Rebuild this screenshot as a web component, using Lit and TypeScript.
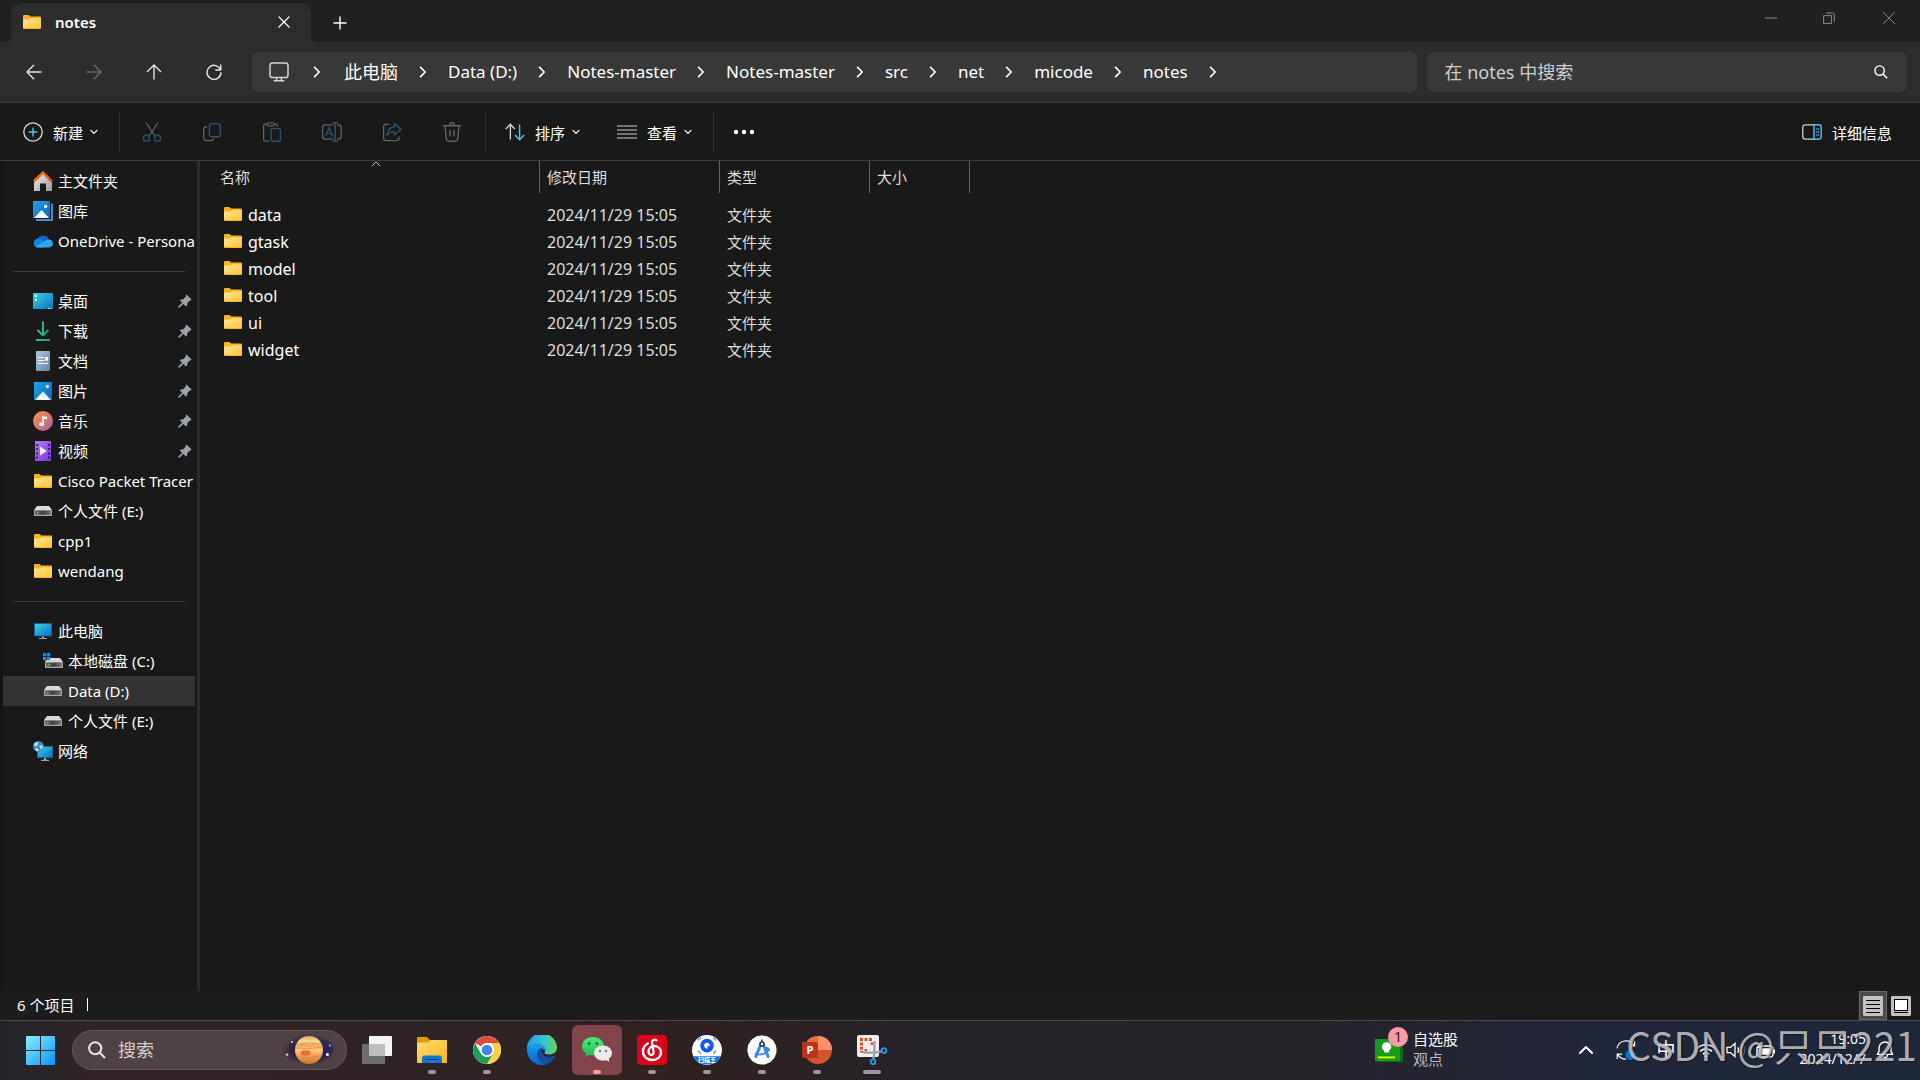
import { LitElement, html, css, svg, nothing, TemplateResult } from "lit";
import { customElement } from "lit/decorators.js";
import { classMap } from "lit/directives/class-map.js";

const icon = (w: number, h: number, body: unknown) =>
  html`<svg width=${w} height=${h} viewBox="0 0 ${w} ${h}" fill="none" aria-hidden="true">${body}</svg>`;

/* ---------- shared gradients ---------- */
const gradients = html`<svg class="defs" width="0" height="0" aria-hidden="true">
  <defs>
    <linearGradient id="gFolder" x1="0" y1="0" x2="1" y2="1"><stop offset="0" stop-color="#ffe8a0" /><stop offset="1" stop-color="#fdc42f" /></linearGradient>
    <linearGradient id="gScreen" x1="0" y1="0" x2="1" y2="1"><stop offset="0" stop-color="#34d6df" /><stop offset="1" stop-color="#0f6fc6" /></linearGradient>
    <linearGradient id="gPhoto" x1="0" y1="0" x2="1" y2="1"><stop offset="0" stop-color="#22a4ea" /><stop offset="1" stop-color="#0a63b8" /></linearGradient>
    <linearGradient id="gHouse" x1="0" y1="0" x2="1" y2="1"><stop offset="0" stop-color="#f2f2f2" /><stop offset="1" stop-color="#9a9a9a" /></linearGradient>
    <linearGradient id="gRoof" x1="0" y1="0" x2="1" y2="1"><stop offset="0" stop-color="#f7930f" /><stop offset="1" stop-color="#d2441a" /></linearGradient>
    <linearGradient id="gDown" x1="0" y1="0" x2="1" y2="0"><stop offset="0" stop-color="#2fc58a" /><stop offset="1" stop-color="#12a08b" /></linearGradient>
    <linearGradient id="gDoc" x1="0" y1="0" x2="1" y2="1"><stop offset="0" stop-color="#b4c6dc" /><stop offset="1" stop-color="#5f82a8" /></linearGradient>
    <linearGradient id="gMusic" x1="0" y1="0" x2="1" y2="1"><stop offset="0" stop-color="#f39a5c" /><stop offset=".55" stop-color="#d8706f" /><stop offset="1" stop-color="#9a5fbd" /></linearGradient>
    <linearGradient id="gVideo" x1="0" y1="0" x2="1" y2="1"><stop offset="0" stop-color="#b47af5" /><stop offset="1" stop-color="#7a35dd" /></linearGradient>
    <linearGradient id="gDrive" x1="0" y1="0" x2="1" y2="0"><stop offset="0" stop-color="#6a6a6a" /><stop offset=".5" stop-color="#3f3f3f" /><stop offset="1" stop-color="#757575" /></linearGradient>
    <linearGradient id="gLogo" gradientUnits="userSpaceOnUse" x1="0" y1="0" x2="29" y2="29"><stop offset="0" stop-color="#84f2ff" /><stop offset="1" stop-color="#0b93f8" /></linearGradient>
    <linearGradient id="gPlanet" x1="0" y1="0" x2="0" y2="1"><stop offset="0" stop-color="#e0a25c" /><stop offset=".18" stop-color="#fbd79a" /><stop offset=".34" stop-color="#f0a95a" /><stop offset=".5" stop-color="#fbc983" /><stop offset=".7" stop-color="#f3a14d" /><stop offset="1" stop-color="#c9703a" /></linearGradient>
    <radialGradient id="gSpace"><stop offset="0" stop-color="#1d1538" /><stop offset=".65" stop-color="#2a1d3c" stop-opacity=".8" /><stop offset="1" stop-color="#3a2a3c" stop-opacity="0" /></radialGradient>
    <linearGradient id="gEdgeA" x1="0" y1="0" x2="1" y2="0"><stop offset="0" stop-color="#1d9be6" /><stop offset=".55" stop-color="#35c3d8" /><stop offset="1" stop-color="#62d84e" /></linearGradient>
    <linearGradient id="gEdgeB" x1="0" y1="0" x2="0" y2="1"><stop offset="0" stop-color="#1aa0ea" /><stop offset="1" stop-color="#0a62c8" /></linearGradient>
    <linearGradient id="gTaskFolder" x1="0" y1="0" x2="1" y2="1"><stop offset="0" stop-color="#ffdc70" /><stop offset="1" stop-color="#f9b71c" /></linearGradient>
    <linearGradient id="gChat" x1="0" y1="0" x2="0" y2="1"><stop offset="0" stop-color="#4be87c" /><stop offset="1" stop-color="#1fbf57" /></linearGradient>
  </defs>
</svg>`;

/* ---------- small file icons ---------- */
const folder = () => icon(18, 14, svg`
  <path d="M0 1Q0 0 1 0H5.4L7.2 1.6H17Q18 1.6 18 2.6V13Q18 14 17 14H1Q0 14 0 13Z" fill="#f9b31b"/>
  <path d="M0 4.4H6.4L8 3.2H18V12.6Q18 13 17.4 13H.6Q0 13 0 12.6Z" fill="url(#gFolder)"/>`);
const home = () => icon(20, 20, svg`
  <path d="M1 9L10 1.5L19 9V20H13V12.5H7V20H1Z" fill="url(#gHouse)"/>
  <path d="M10 0L20 9.4L18.4 11.4L10 3.6L1.6 11.4L0 9.4Z" fill="url(#gRoof)"/>`);
const gallery = () => icon(20, 20, svg`
  <path d="M18 2.5H20V19Q20 20 19 20H3V18H18Z" fill="#3f8fd6"/>
  <rect width="17" height="17" rx="1" fill="url(#gPhoto)"/>
  <circle cx="12.6" cy="5.4" r="1.6" fill="#fff"/>
  <path d="M1 17L8.5 9L16 17Z" fill="#f3f8fd"/>`);
const cloud = () => icon(20, 14, svg`
  <path d="M3.5 7A6.6 6.6 0 0 1 15.6 4.6L18 9H3Z" fill="#0f64bf"/>
  <path d="M4.6 13.4A4.4 4.4 0 0 1 4.4 4.7Q7 4.2 9.6 6.2L16 10L10 13.4Z" fill="#1484de"/>
  <path d="M2.4 12.4L12.4 6.8A4 4 0 0 1 15.6 5.4A4 4 0 0 1 16 13.4H4.6Q3.2 13.4 2.4 12.4Z" fill="#2ba6f0"/>`);
const desktop = () => icon(20, 16, svg`
  <rect width="20" height="16" rx="1" fill="url(#gScreen)"/>
  <path d="M2 2H4V4H2ZM2 6H4V8H2Z" fill="#e8fbff"/><path d="M15 15H16.4V16H15ZM17.2 15H18.4V16H17.2Z" fill="#cfe6f7"/>`);
const download = () => icon(20, 20, svg`
  <path d="M10 .5V14M4.4 9L10 14.4L15.6 9" stroke="url(#gDown)" stroke-width="1.8"/>
  <path d="M10 .5V14" stroke="#26b98a" stroke-width="1.8"/><path d="M3 18H17V20H3Z" fill="url(#gDown)"/>`);
const documentIcon = () => icon(20, 20, svg`
  <rect x="3" width="14" height="20" rx="1" fill="url(#gDoc)"/>
  <path d="M5 6.5H11M5 9.5H11M5 12.5H15" stroke="#fff" stroke-width="1"/><rect x="12" y="6" width="3" height="3.6" fill="#fff"/>`);
const picture = () => icon(20, 18, svg`
  <rect x="1" width="18" height="18" rx="1" fill="url(#gPhoto)"/>
  <circle cx="14.4" cy="4.6" r="1.6" fill="#fff"/><path d="M2 18L10 9.4L18 18Z" fill="#f3f8fd"/>`);
const music = () => icon(20, 20, svg`
  <circle cx="10" cy="10" r="10" fill="url(#gMusic)"/>
  <ellipse cx="8.6" cy="13.2" rx="2.4" ry="2" fill="#fff"/><path d="M9.4 13V4.4Q11 6 14 5.6V8.2Q12 8.4 11 7.6V13Z" fill="#fff"/>`);
const video = () => icon(20, 20, svg`
  <rect x="2" width="16" height="20" rx="1" fill="url(#gVideo)"/>
  <path d="M3 3H5V5H3ZM3 7H5V9H3ZM3 11.4H5V13.4H3ZM3 15.6H5V17.6H3ZM15 3H17V5H15ZM15 7H17V9H15ZM15 11.4H17V13.4H15ZM15 15.6H17V17.6H15Z" fill="#3a1b78"/>
  <path d="M7 5.6L14 10L7 14.4Z" fill="#f4edff"/>`);
const driveBody = svg`<path d="M3 0H15L18 4H0Z" fill="#d9dadd"/><rect y="4" width="18" height="6" rx=".6" fill="#a9a9a9"/><rect x="1" y="4.6" width="16" height="4.2" fill="url(#gDrive)"/><rect x="3" y="6" width="1.6" height="1.6" fill="#35e04a"/>`;
const drive = () => icon(18, 10, driveBody);
const systemDrive = () => icon(20, 16, svg`
  <g transform="translate(2 5)">${driveBody}</g>
  <path d="M0 0H3.2V3.2H0ZM4 0H7.2V3.2H4ZM0 4H3.2V7.2H0ZM4 4H7.2V7.2H4Z" fill="#1493e8"/>`);
const pc = () => icon(18, 16, svg`
  <rect width="18" height="13.4" fill="#14649c"/><rect x="1" y="1" width="16" height="11.4" fill="url(#gScreen)"/>
  <path d="M8 13.4H10V15H13V16H5V15H8Z" fill="#9aa7b2"/>`);
const network = () => icon(20, 20, svg`
  <rect x="4" y="5" width="16" height="12" fill="#14649c"/><rect x="5" y="6" width="14" height="10" fill="url(#gScreen)"/>
  <path d="M11 17H13V18.8H16V20H8V18.8H11Z" fill="#9aa7b2"/>
  <circle cx="5.4" cy="5.4" r="5.4" fill="#3c8fc4"/><path d="M1 3Q3 .6 5 1.2L4.6 4.4L2 5.4ZM6.4 5L9.8 4Q10 7 8 8.6Z" fill="#c3e2f2"/><path d="M2.4 7L5 8L5.6 10H4Q2.6 9.4 2.4 7Z" fill="#e7f4fa"/>`);
const pin = () => icon(14, 14, svg`
  <path d="M8.4 .4L13.6 5.4L12.6 6.4L11.8 6.4L9.4 9L9.2 11.6L8 12.6L1.8 6.4L2.8 5.4L5.2 5.2L7.8 2.4L7.6 1.4Z" fill="#99a3ab"/>
  <path d="M5 9L.6 13.4" stroke="#99a3ab" stroke-width="1.6"/>`);

/* ---------- chrome icons ---------- */
const line = (w: number, h: number, d: string, sw = 1.4) =>
  icon(w, h, svg`<path d=${d} stroke="currentColor" stroke-width=${sw} stroke-linecap="round" stroke-linejoin="round"/>`);
const back = () => line(16, 16, "M1 8H15M7.6 1.2L1 8L7.6 14.8");
const forward = () => line(16, 16, "M15 8H1M8.4 1.2L15 8L8.4 14.8");
const up = () => line(16, 16, "M8 15V1M1.4 7.6L8 1L14.6 7.6");
const reload = () => line(16, 16, "M14.6 6A7 7 0 1 0 15 8.6M14.8 1V6H9.8");
const cross = () => line(12, 12, "M1 1L11 11M11 1L1 11", 1.2);
const plus = () => line(14, 14, "M7 1V13M1 7H13", 1.4);
const crumbChevron = () => line(8, 12, "M1.6 1.4L6.2 6L1.6 10.6", 1.7);
const downChevron = () => line(8, 6, "M1 1.4L4 4.4L7 1.4", 1.2);
const monitor = () => icon(20, 20, svg`
  <rect x="1" y="1" width="18" height="14.6" rx="2.6" stroke="#d4d4d4" stroke-width="1.5"/>
  <path d="M7.6 15.6V18.4M12.4 15.6V18.4M4.6 18.8H15.4" stroke="#d4d4d4" stroke-width="1.4"/>`);
const search = (s: number, sw: number) => html`<svg width=${s} height=${s} viewBox="0 0 14 14" fill="none" aria-hidden="true">
  <circle cx="5.6" cy="5.6" r="4.7" stroke="currentColor" stroke-width=${sw} /><path d="M9 9L13.2 13.2" stroke="currentColor" stroke-width=${sw} /></svg>`;

const G = "#626262";
const B = "#27536b";
const newItem = () => icon(20, 20, svg`<circle cx="10" cy="10" r="9.2" stroke="#d8d8d8" stroke-width="1.3"/><path d="M10 5.6V14.4M5.6 10H14.4" stroke="#4cc2ff" stroke-width="1.4"/>`);
const cut = () => icon(20, 20, svg`<path d="M4 .6L13 14M16 .6L7 14" stroke=${G} stroke-width="1.2"/><circle cx="4.4" cy="16.2" r="3" stroke=${B} stroke-width="1.4"/><circle cx="15.6" cy="16.2" r="3" stroke=${B} stroke-width="1.4"/>`);
const copy = () => icon(20, 20, svg`<path d="M5 5H4Q1.6 5 1.6 7.6V15Q1.6 18.6 5 18.6H9Q11.4 18.6 11.6 16.4" stroke=${G} stroke-width="1.3"/><rect x="7.4" y="1.6" width="11" height="13.2" rx="2.6" stroke=${B} stroke-width="1.4"/>`);
const paste = () => icon(20, 20, svg`<path d="M7 19.2H3.4Q1.6 19.2 1.6 17.4V4Q1.6 2.2 3.4 2.2H5M12.4 2.2H13.6Q15.4 2.2 15.4 4V5" stroke=${G} stroke-width="1.3"/><rect x="5" y=".8" width="7.4" height="3" rx="1.4" stroke=${G} stroke-width="1.2"/><rect x="9" y="6.6" width="9.4" height="12.6" rx="1.6" stroke=${B} stroke-width="1.4"/>`);
const rename = () => icon(22, 20, svg`<path d="M12.4 2.8H4Q1.6 2.8 1.6 5.2V14.6Q1.6 17.2 4 17.2H12.4M16 2.8H17.6Q20.2 2.8 20.2 5.2V14.6Q20.2 17.2 17.6 17.2H16" stroke=${G} stroke-width="1.3"/><path d="M14.2 1V19M11.4 .8H17M11.4 19.2H17" stroke=${B} stroke-width="1.5"/><path d="M4.6 14.4L8.1 5.4L11.6 14.4M5.8 11.4H10.4" stroke=${B} stroke-width="1.4"/>`);
const share = () => icon(20, 20, svg`<path d="M7.6 2.4H4Q1.6 2.4 1.6 5V16Q1.6 18.6 4 18.6H14.6Q17 18.6 17 16V14.6" stroke=${G} stroke-width="1.3"/><path d="M12.4 1.6L19 7.4L12.4 13V9.8Q8 9.6 5 13.4Q5.8 5.4 12.4 5Z" stroke=${B} stroke-width="1.4" stroke-linejoin="round"/>`);
const trash = () => icon(20, 20, svg`<path d="M1 3.8H19M3 4L4.4 17.2Q4.6 19.2 6.6 19.2H13.4Q15.4 19.2 15.6 17.2L17 4M7.4 3.6Q7.6 .8 10 .8Q12.4 .8 12.6 3.6M8 8V14.6M12 8V14.6" stroke=${G} stroke-width="1.4"/>`);
const sort = () => icon(20, 18, svg`<path d="M5.4 16.4V1.4M.8 6L5.4 1.2L9.8 6" stroke="#d8d8d8" stroke-width="1.3"/><path d="M14.6 1.4V16.4M10 12L14.6 16.8L19.2 12" stroke="#4cc2ff" stroke-width="1.4"/>`);
const lines = () => icon(20, 14, svg`<path d="M0 1H20M0 5H20M0 9H20M0 13H20" stroke="#cfcfcf" stroke-width="1.2"/>`);
const dots = () => icon(22, 6, svg`<circle cx="3" cy="3" r="2.2" fill="#fff"/><circle cx="11" cy="3" r="2.2" fill="#fff"/><circle cx="19" cy="3" r="2.2" fill="#fff"/>`);
const details = () => icon(20, 16, svg`<path d="M12 .8H3.4Q.8 .8 .8 3.4V12.6Q.8 15.2 3.4 15.2H12" stroke="#cfcfcf" stroke-width="1.3"/><path d="M12 .8H16.6Q19.2 .8 19.2 3.4V12.6Q19.2 15.2 16.6 15.2H12Z" stroke="#4cc2ff" stroke-width="1.4"/><path d="M14 5H17.4M14 8H17.4M14 11H17.4" stroke="#4cc2ff" stroke-width="1.2"/>`);

/* ---------- taskbar icons ---------- */
const start = () => icon(29, 29, svg`<path d="M1 0H14V14H0V1Q0 0 1 0ZM15 0H28Q29 0 29 1V14H15ZM0 15H14V29H1Q0 29 0 28ZM15 15H29V28Q29 29 28 29H15Z" fill="url(#gLogo)"/>`);
const planet = () => icon(56, 32, svg`
  <ellipse cx="28" cy="16" rx="28" ry="16" fill="url(#gSpace)"/><ellipse cx="43" cy="15" rx="9" ry="9" fill="#27245c" opacity=".7"/>
  <circle cx="28" cy="16" r="14" fill="url(#gPlanet)"/>
  <path d="M15.4 10.6Q28 7.6 40.6 10M14.4 14Q27 16 41.6 13M15.4 22.6Q28 25 40.4 22" stroke="#d98a45" stroke-width="1" opacity=".7"/>
  <ellipse cx="24.6" cy="19" rx="5" ry="2.8" fill="#e5703a"/>
  <circle cx="11" cy="8" r="1" fill="#d9c8d8"/><circle cx="6" cy="20.6" r="1.2" fill="#e8d8cf"/><circle cx="49" cy="11.4" r="1" fill="#bdb6dc"/><circle cx="46.4" cy="20.6" r="1.5" fill="#fff"/>`);
const taskView = () => icon(30, 28, svg`<rect y="8" width="23" height="20" rx="1" fill="#6d6d6d"/><rect x="7" width="23" height="20" rx="1" fill="#f4f4f4"/><path d="M7 8H23V20H7Z" fill="#bdbdbd"/>`);
const explorer = () => icon(30, 28, svg`
  <path d="M0 2Q0 1 1 1H10L13 4H29Q30 4 30 5V10H0Z" fill="#e39c08"/><path d="M0 7.6Q0 6.4 1.2 6.4H11L13.6 4H28.8Q30 4 30 5.2V26Q30 27 29 27H1Q0 27 0 26Z" fill="url(#gTaskFolder)"/>
  <path d="M5 27V22Q5 19.6 7.4 19.6H22.6Q25 19.6 25 22V27Z" fill="#0f78d4"/><path d="M8.4 23.4H21.6" stroke="#0a3f83" stroke-width="1.2"/>`);
const chrome = () => icon(28, 28, svg`
  <circle cx="14" cy="14" r="14" fill="#fff"/>
  <path d="M1.9 7A14 14 0 0 1 26.1 7H14A7 7 0 0 0 8 10.5Z" fill="#dd4b3e"/>
  <path d="M26.1 7A14 14 0 0 1 14 28L20 17.5A7 7 0 0 0 20 10.4L18 7Z" fill="#fdd043"/>
  <path d="M1.9 7A14 14 0 0 0 14 28L20 17.5A7 7 0 0 1 8 17.5Z" fill="#1d9e57"/>
  <circle cx="14" cy="14" r="6.6" fill="#fff"/><circle cx="14" cy="14" r="5.3" fill="#4285f4"/>`);
const edge = () => icon(30, 30, svg`
  <path d="M0 14A15 15 0 0 1 30 12.6C30 17.6 26 19.6 22 19.6C18.4 19.6 17 18.4 17.6 17.4C19.8 13.6 17 10 12.4 9.4C6 8.8 1.4 11.4 0 14Z" fill="url(#gEdgeA)"/>
  <path d="M0 15C.2 10.6 6 8.6 11 9.2C16.8 9.8 19 13 18 16C15.6 11.8 10.6 14.6 10.4 19C10.2 24.4 15 29 20 29.2A15 15 0 0 1 0 15Z" fill="url(#gEdgeB)"/>
  <path d="M10.4 18.6C10.2 15 13 12.6 15.4 13.2C13.6 16.8 16.4 21.8 22 22Q25.4 22 28 20.6C28.6 20.6 28.4 21.4 27.6 22.4A15 15 0 0 1 19.6 29.3C14.6 29 10.6 24.4 10.4 18.6Z" fill="#134f9f"/>`);
const wechat = () => icon(30, 26, svg`
  <path d="M11 0C4.8 0 0 4 0 9.2C0 12.2 1.6 14.8 4.2 16.4L3.2 19.8L7.2 17.8C8.4 18.2 9.8 18.4 11 18.4C17 18.4 22 14.4 22 9.2C22 4 17 0 11 0Z" fill="url(#gChat)"/>
  <circle cx="7.2" cy="6.6" r="1.4" fill="#146c34"/><circle cx="14.8" cy="6.6" r="1.4" fill="#146c34"/>
  <path d="M21 8.4C26 8.4 30 11.8 30 16C30 18.4 28.8 20.4 26.8 21.8L27.4 24.8L24.2 23.2C23.2 23.5 22 23.6 21 23.6C16 23.6 12 20.2 12 16C12 11.8 16 8.4 21 8.4Z" fill="#ececec"/>
  <circle cx="18" cy="14" r="1.2" fill="#777"/><circle cx="24" cy="14" r="1.2" fill="#777"/>`);
const netease = () => icon(30, 30, svg`<rect width="30" height="30" rx="4" fill="#dd001b"/>
  <path d="M19.6 5.4C17.6 4 14.6 5.2 15 8L16.6 16.6C17 19.4 14.6 20.4 13 19.4C10.6 18 11.2 13.6 14 12C18 9.6 23.6 12 24 17C24.2 21.8 20 25 15.4 25C10 25 6 21.4 6 16.4C6 12.8 7.8 10 10.8 8.4" stroke="#fff" stroke-width="2.3" stroke-linecap="round"/>`);
const scanner = () => icon(30, 30, svg`
  <circle cx="15" cy="15" r="15" fill="#fff"/><path d="M1.6 21.2H28.4A15 15 0 0 1 1.6 21.2Z" fill="#0a6cf0"/>
  <circle cx="15" cy="10.6" r="4.8" stroke="#1257f5" stroke-width="4"/><circle cx="16.6" cy="12" r="1.2" fill="#1257f5"/>
  <path d="M6 5.6Q7 3.4 9 2.6M24 5.6Q23 3.4 21 2.6M6 15.6Q7 17.6 9 18.6M24 15.6Q23 17.6 21 18.6" stroke="#4b8dfb" stroke-width="1.2"/>
  <text x="15" y="27.2" text-anchor="middle" font-family="Noto Sans CJK SC, sans-serif" font-weight="900" font-size="6" fill="#fff">扫描王</text>`);
const studio = () => icon(30, 30, svg`
  <circle cx="15" cy="15" r="13.4" fill="#fff"/><circle cx="15" cy="15" r="13.4" stroke="#fff" stroke-width="2.4" stroke-dasharray="3.6 2" stroke-linecap="round"/>
  <path d="M17 12H20Q23 12.6 23 16L20 17Z" fill="#2e9f5b"/>
  <path d="M14 9L8.4 22.6M16 9L21.6 22.6" stroke="#3f83f2" stroke-width="3"/><path d="M8 18.4Q15 22 21.6 15" stroke="#3f83f2" stroke-width="1.8"/>
  <circle cx="15" cy="9" r="2" fill="#fff" stroke="#203449" stroke-width="1.6"/><path d="M15 4.6V6.6" stroke="#203449" stroke-width="1.6"/>`);
const powerpoint = () => icon(30, 28, svg`
  <circle cx="16" cy="14" r="14" fill="#d35230"/><path d="M16 0A14 14 0 0 0 2 14H16Z" fill="#ed6c47"/><path d="M16 0A14 14 0 0 1 30 14H16Z" fill="#ff8f6b"/>
  <rect y="6" width="16" height="16" rx="1" fill="#b9361a"/><text x="8" y="18" text-anchor="middle" font-family="Open Sans, sans-serif" font-weight="700" font-size="11" fill="#fff">P</text>`);
const snip = () => icon(30, 30, svg`
  <rect width="22" height="22" rx="2" fill="#eceeef"/>
  <path d="M3 3H6V6H3ZM7.6 3H10.4V6H7.6ZM12 3H15V6H12ZM3 7.4H6V10.4H3ZM3 11.8H6V14.8H3ZM7.6 14H10V16.6H7.6ZM3 16H6V17.6H3ZM13.6 7.4H16V10H13.6Z" fill="#d8491f"/>
  <path d="M17.4 6V18L16.4 24M6 17.6H17L24 16.4" stroke="#9aa3a9" stroke-width="2.4"/>
  <circle cx="27" cy="15.6" r="2.4" stroke="#1e9de4" stroke-width="1.8"/><circle cx="16" cy="26.8" r="2.4" stroke="#1e9de4" stroke-width="1.8"/>`);
const bulb = () => icon(28, 24, svg`
  <path d="M3 1H28V24H3Z" fill="#0b6a12"/><path d="M0 1H25V23H0Z" fill="#159a1b"/><path d="M3 19.4H20" stroke="#d6f500" stroke-width="2"/>
  <path d="M11.6 4.2A4.4 4.4 0 0 1 14.4 12.2L13.8 14.6H9.4L8.8 12.2A4.4 4.4 0 0 1 11.6 4.2Z" fill="#fff"/>`);
const sync = () => icon(20, 20, svg`<path d="M1 8.4A9.2 9.2 0 0 1 18 5.4M18.6 1V5.8H14M10 19.2Q4.4 19 1.8 14.6M1.2 19V14.2H6" stroke="#fff" stroke-width="1.2"/><circle cx="14.6" cy="15" r="5" fill="#0078d7"/>`);
const wifi = () => icon(20, 16, svg`<path d="M1 6.4A13 13 0 0 1 19 6.4M4 9.4A9 9 0 0 1 16 9.4M6.8 12.2A5 5 0 0 1 13.2 12.2" stroke="#fff" stroke-width="1.5"/><circle cx="10" cy="14.2" r="1.6" fill="#fff"/>`);
const speaker = () => icon(20, 16, svg`<path d="M1 5.4H4.4L9 1.4V14.6L4.4 10.6H1Z" stroke="#fff" stroke-width="1.3"/><path d="M11.6 5.4Q13.6 8 11.6 10.6" stroke="#fff" stroke-width="1.3"/><path d="M14 3.4Q17.2 8 14 12.6M16.6 1.6Q20.6 8 16.6 14.4" stroke="#5b6070" stroke-width="1.2"/>`);
const battery = () => icon(20, 16, svg`<rect x="1" y="4" width="16" height="11" rx="3" stroke="#fff" stroke-width="1.4"/><rect x="3.4" y="6.2" width="11" height="6.6" rx="1" fill="#fff"/><path d="M18 7.4V11.4" stroke="#fff" stroke-width="2"/><path d="M4.6 0L.4 6H3.4L2 10L7 4.4H4Z" fill="#fff"/>`);
const bell = () => icon(18, 18, svg`<path d="M1.4 13.4L3 10.4V7A6 6 0 0 1 15 7V10.4L16.6 13.4ZM6.6 14Q7 16.6 9 16.6Q11 16.6 11.4 14" stroke="#fff" stroke-width="1.4" stroke-linejoin="round"/>`);

type Place = { label: string; glyph: () => TemplateResult; pinned?: boolean; nested?: boolean; current?: boolean };
const places: Place[][] = [
  [
    { label: "主文件夹", glyph: home },
    { label: "图库", glyph: gallery },
    { label: "OneDrive - Persona", glyph: cloud },
  ],
  [
    { label: "桌面", glyph: desktop, pinned: true },
    { label: "下载", glyph: download, pinned: true },
    { label: "文档", glyph: documentIcon, pinned: true },
    { label: "图片", glyph: picture, pinned: true },
    { label: "音乐", glyph: music, pinned: true },
    { label: "视频", glyph: video, pinned: true },
    { label: "Cisco Packet Tracer", glyph: folder },
    { label: "个人文件 (E:)", glyph: drive },
    { label: "cpp1", glyph: folder },
    { label: "wendang", glyph: folder },
  ],
  [
    { label: "此电脑", glyph: pc },
    { label: "本地磁盘 (C:)", glyph: systemDrive, nested: true },
    { label: "Data (D:)", glyph: drive, nested: true, current: true },
    { label: "个人文件 (E:)", glyph: drive, nested: true },
    { label: "网络", glyph: network },
  ],
];
const crumbs = ["此电脑", "Data (D:)", "Notes-master", "Notes-master", "src", "net", "micode", "notes"];
const files = ["data", "gtask", "model", "tool", "ui", "widget"];
const apps: { name: string; glyph: () => TemplateResult; mark?: string }[] = [
  { name: "任务视图", glyph: taskView },
  { name: "文件资源管理器", glyph: explorer, mark: "dot" },
  { name: "Chrome", glyph: chrome, mark: "dot" },
  { name: "Edge", glyph: edge },
  { name: "微信", glyph: wechat, mark: "alert" },
  { name: "网易云音乐", glyph: netease, mark: "dot" },
  { name: "扫描王", glyph: scanner, mark: "dot" },
  { name: "Android Studio", glyph: studio, mark: "dot" },
  { name: "PowerPoint", glyph: powerpoint, mark: "dot" },
  { name: "截图工具", glyph: snip, mark: "wide" },
];

@customElement("app-root")
export class AppRoot extends LitElement {
  static styles = css`
    :host { display: flex; flex-direction: column; min-height: 100vh; background: #191919; color: #fff; font: 15px/20px "Noto Sans", "Noto Sans CJK SC", sans-serif; }
    * { box-sizing: border-box; }
    svg { display: block; flex: none; }
    .defs { position: absolute; }
    button, input { font: inherit; color: inherit; background: none; border: 0; padding: 0; margin: 0; }
    button { display: flex; align-items: center; justify-content: center; white-space: nowrap; }
    a { color: inherit; text-decoration: none; }
    ul, ol { list-style: none; margin: 0; padding: 0; }
    .latin { font-size: 16px; }

    .titlebar { display: flex; align-items: stretch; height: 42px; padding-left: 11px; background: #202020; }
    .tab { position: relative; display: flex; align-items: center; width: 300px; margin-top: 3px; padding: 0 8px 2px 12px; background: #2c2c2c; border-radius: 10px 10px 0 0; font-weight: 600; }
    .tab::before, .tab::after { content: ""; position: absolute; bottom: 0; width: 5px; height: 5px; }
    .tab::before { right: 100%; background: radial-gradient(circle at 0 0, transparent 5px, #2c2c2c 5px); }
    .tab::after { left: 100%; background: radial-gradient(circle at 100% 0, transparent 5px, #2c2c2c 5px); }
    .tab-name { flex: 1; margin-left: 14px; }
    .tab button { width: 38px; height: 30px; }
    .add { width: 58px; padding-top: 4px; }
    .window { display: flex; margin-left: auto; padding-bottom: 6px; color: #8c8c8c; }
    .window button { width: 58px; }
    .window button:last-child { width: 62px; }

    .nav { display: flex; align-items: center; height: 61px; padding: 0 14px 0 4px; background: #2c2c2c; border-bottom: 1px solid #3b3b3b; font-size: 18px; line-height: 24px; }
    .nav > button { width: 60px; height: 40px; color: #e4e4e4; }
    .nav > button:disabled { color: #666; }
    .address { display: flex; flex: 1; align-items: center; height: 40px; margin-left: 8px; padding-left: 17px; background: #383838; border-radius: 6px; }
    .address ol { display: flex; align-items: center; font-size: 17px; }
    .address li { display: flex; align-items: center; color: #fff; }
    .address li:nth-child(2) { font-size: 18px; }
    .address li > button { width: 50px; height: 40px; }
    .address li > .first { width: 55px; }
    .find { display: flex; align-items: center; width: calc(25% + 4px); height: 40px; margin-left: 10px; padding: 0 18px; background: #383838; border-radius: 6px; }
    .find input { flex: 1; min-width: 0; outline: 0; }
    .find input::placeholder { color: #cfcfcf; opacity: 1; }

    .tools { display: flex; align-items: center; height: 58px; border-bottom: 1px solid #3b3b3b; padding: 0 28px 0 23px; }
    .tools button { height: 40px; }
    .tools .text { gap: 7px; }
    .tools .text span { padding: 2px 0 0 3px; }
    .tools .square { width: 60px; }
    .rule { width: 1px; height: 40px; background: #303030; }
    .grow { margin-left: auto; }
    .new { margin-right: 21px; }
    .edit { display: flex; margin: 0 3px 0 2px; }
    .order { margin-left: 19px; }
    .view { margin: 0 21px 0 37px; }
    .more { width: 60px; }

    .body { display: flex; flex: 1; min-height: 0; }
    .side { width: 200px; flex: none; padding: 5px 2px 0 0; background: #191919; border-left: 3px solid #141414; border-right: 3px solid #2b2b2b; }
    .side a { display: flex; align-items: center; height: 30px; padding: 0 0 0 30px; overflow: hidden; white-space: nowrap; }
    .side a.nested { padding-left: 40px; }
    .side a.current { background: #333; }
    .side .glyph { display: flex; justify-content: center; width: 20px; margin-right: 5px; flex: none; }
    .side .label { flex: 1; min-width: 0; overflow: hidden; }
    .side .pin { margin: 0 3px 0 0; }
    .side hr { height: 1px; border: 0; margin: 15px 10px 14px; background: #3b3b3b; }

    .list { flex: 1; min-width: 0; }
    table { border-collapse: separate; border-spacing: 0; table-layout: fixed; width: 770px; color: #dedede; }
    th { position: relative; height: 32px; padding: 0 0 0 7px; border-right: 1px solid #626262; text-align: left; font-weight: 400; }
    th:first-child { padding-left: 20px; }
    td:first-child { padding-left: 24px; }
    .c1 { width: 340px; } .c2 { width: 180px; } .c3 { width: 150px; } .c4 { width: 100px; }
    .caret { position: absolute; top: 0; left: 171px; color: #bdbdbd; }
    tbody::before { content: ""; display: block; height: 8px; }
    td { height: 27px; padding: 0 0 0 7px; }
    .file { display: flex; align-items: center; gap: 6px; color: #fff; }
    .file svg { margin-bottom: 2px; }

    .status { display: flex; align-items: center; height: 29px; padding: 0 5px 0 17px; background: #1c1c1c; }
    .status > span { margin-bottom: 2px; }
    .status .bar { width: 1px; height: 13px; margin-left: 13px; background: #fff; }
    .modes { display: flex; margin-left: auto; height: 29px; }
    .modes button { width: 28px; }
    .modes .on { background: #4a4a4a; border: 1px solid #696969; }

    .taskbar { position: relative; display: flex; align-items: center; height: 60px; padding: 0 26px 1px; border-top: 1px solid #4a4647;
      background: linear-gradient(90deg, #23252d 0, #302427 5%, #2e2325 24%, #31211f 34%, #26222a 48%, #26232b 68%, #20263a 84%, #1d2838 100%); }
    .pill { display: flex; align-items: center; width: 275px; height: 40px; margin: 0 4px 0 17px; padding: 0 9px 0 15px; background: #4d4244; border: 1px solid #62585a; border-radius: 20px; color: #e4e4e4; font-size: 18px; }
    .pill input { flex: 1; min-width: 0; margin-left: 12px; outline: 0; }
    .pill input::placeholder { color: #d4d0d0; opacity: 1; }
    .apps { display: flex; }
    .app { position: relative; width: 50px; height: 50px; margin-right: 5px; border-radius: 6px; }
    .app:first-child { margin-left: 1px; }
    .app.alert { background: #80444a; }
    .app i { position: absolute; bottom: 1px; left: 21px; width: 8px; height: 4px; border-radius: 2px; background: #9d9799; }
    .app.alert i { background: #ff99a4; }
    .app.wide i { left: 16px; width: 18px; }
    .news { position: relative; gap: 10px; margin-left: auto; margin-right: 121px; text-align: left; }
    .news .lines { padding-bottom: 2px; }
    .news small { display: block; font-size: 15px; line-height: 20px; }
    .news small + small { color: #b9b8bd; }
    .badge { position: absolute; left: 13px; top: -2px; width: 20px; height: 20px; border-radius: 10px; background: #ff99a4; color: #1b1b1b; font-size: 14px; line-height: 20px; text-align: center; }
    .tray { display: flex; align-items: center; gap: 10px; }
    .tray .sync { margin: 0 10px 0 13px; }
    .tray .ime { width: 20px; margin-right: 10px; font-size: 19px; }
    .clock { display: block; width: 80px; padding-bottom: 2px; font-size: 14px; text-align: right; }
    .mark { position: absolute; right: 3px; top: 0; font: 39px/46px "Noto Sans CJK SC", sans-serif; color: rgba(200, 200, 200, .85); text-shadow: 1px 1px 1px rgba(0, 0, 0, .5); white-space: nowrap; pointer-events: none; }
  `;

  private place(p: Place) {
    return html`<li><a href="#" class=${classMap({ nested: !!p.nested, current: !!p.current })}>
      <span class="glyph">${p.glyph()}</span><span class="label">${p.label}</span>
      ${p.pinned ? html`<span class="pin">${pin()}</span>` : nothing}</a></li>`;
  }

  render() {
    return html`${gradients}
      <header class="titlebar">
        <div class="tab">${folder()}<span class="tab-name">notes</span><button aria-label="关闭标签页">${cross()}</button></div>
        <button class="add" aria-label="新标签页">${plus()}</button>
        <div class="window">
          <button aria-label="最小化">${line(12, 12, "M0 6H12", 1)}</button>
          <button aria-label="还原">${line(12, 12, "M1 3.6H8.6V11.4H1ZM3.4 1H9.4Q11.4 1 11.4 3V9.4", 1)}</button>
          <button aria-label="关闭">${line(12, 12, "M.5 .5L11.5 11.5M11.5 .5L.5 11.5", 1)}</button>
        </div>
      </header>
      <nav class="nav">
        <button aria-label="后退">${back()}</button>
        <button aria-label="前进" disabled>${forward()}</button>
        <button aria-label="向上">${up()}</button>
        <button aria-label="刷新">${reload()}</button>
        <div class="address">
          ${monitor()}
          <ol>
            <li><button class="first" aria-label="展开">${crumbChevron()}</button></li>
            ${crumbs.map((c) => html`<li><a href="#">${c}</a><button aria-label="展开">${crumbChevron()}</button></li>`)}
          </ol>
        </div>
        <label class="find"><input type="text" aria-label="搜索文件" placeholder="在 notes 中搜索" />${search(14, 1.4)}</label>
      </nav>
      <div class="tools">
        <button class="text new">${newItem()}<span>新建</span>${downChevron()}</button>
        <span class="rule"></span>
        <div class="edit">
          <button class="square" aria-label="剪切" disabled>${cut()}</button>
          <button class="square" aria-label="复制" disabled>${copy()}</button>
          <button class="square" aria-label="粘贴" disabled>${paste()}</button>
          <button class="square" aria-label="重命名" disabled>${rename()}</button>
          <button class="square" aria-label="共享" disabled>${share()}</button>
          <button class="square" aria-label="删除" disabled>${trash()}</button>
        </div>
        <span class="rule"></span>
        <button class="text order">${sort()}<span>排序</span>${downChevron()}</button>
        <button class="text view">${lines()}<span>查看</span>${downChevron()}</button>
        <span class="rule"></span>
        <button class="more" aria-label="更多">${dots()}</button>
        <button class="text grow">${details()}<span>详细信息</span></button>
      </div>
      <div class="body">
        <aside class="side">
          ${places.map((g, n) => html`${n ? html`<hr />` : nothing}<ul>${g.map((p) => this.place(p))}</ul>`)}
        </aside>
        <main class="list">
          <table>
            <colgroup><col class="c1" /><col class="c2" /><col class="c3" /><col class="c4" /></colgroup>
            <thead><tr><th>名称<span class="caret">${line(10, 6, "M1 5L5 1L9 5", 1)}</span></th><th>修改日期</th><th>类型</th><th>大小</th></tr></thead>
            <tbody>
              ${files.map((f) => html`<tr><td><a href="#" class="file latin">${folder()}<span>${f}</span></a></td><td class="latin">2024/11/29 15:05</td><td>文件夹</td><td></td></tr>`)}
            </tbody>
          </table>
        </main>
      </div>
      <footer class="status">
        <span>6 个项目</span><span class="bar"></span>
        <div class="modes">
          <button class="on" aria-label="详细列表">${icon(20, 20, svg`<rect width="20" height="20" rx="1.4" fill="#c2c2c2"/><path d="M3 4.5H17M3 8.5H17M3 12.5H17M3 16.5H17" stroke="#000"/>`)}</button>
          <button aria-label="大缩略图">${icon(20, 20, svg`<rect width="20" height="20" rx="1.4" fill="#c2c2c2"/><rect x="3.5" y="3.5" width="13" height="11" fill="#fff" stroke="#000"/><path d="M3 16.5H17" stroke="#000"/>`)}</button>
        </div>
      </footer>
      <div class="taskbar">
        <button aria-label="开始">${start()}</button>
        <label class="pill">${search(18, 1.6)}<input type="text" aria-label="搜索" placeholder="搜索" />${planet()}</label>
        <div class="apps">
          ${apps.map((a) => html`<button class="app ${a.mark ?? ""}" aria-label=${a.name}>${a.glyph()}${a.mark ? html`<i></i>` : nothing}</button>`)}
        </div>
        <button class="news">${bulb()}<span class="badge">1</span><span class="lines"><small>自选股</small><small>观点</small></span></button>
        <div class="tray">
          <button aria-label="隐藏的图标">${line(14, 10, "M1 8L7 2L13 8", 2)}</button>
          <button class="sync" aria-label="同步">${sync()}</button>
          <button class="ime">中</button>
          <button aria-label="网络">${wifi()}</button>
          <button aria-label="音量">${speaker()}</button>
          <button aria-label="电池">${battery()}</button>
          <button class="clock">19:05<br />2024/12/7</button>
          <button aria-label="通知">${bell()}</button>
        </div>
        <div class="mark">CSDN @只只221</div>
      </div>`;
  }
}
